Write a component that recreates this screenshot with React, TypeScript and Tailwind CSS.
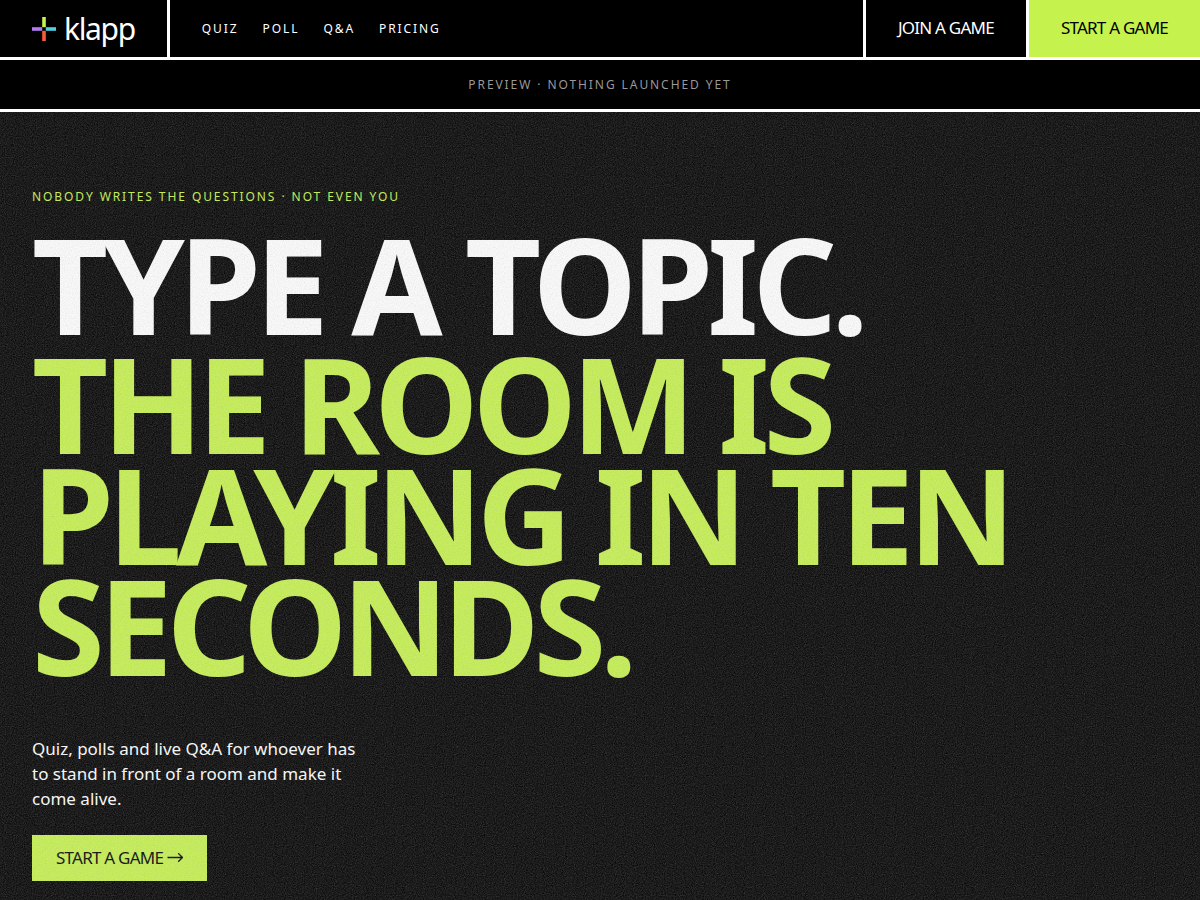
const navLinks = ["Quiz", "Poll", "Q&A", "Pricing"];

const LogoMark = () => (
  <svg width="24" height="24" viewBox="0 0 24 24" aria-hidden="true">
    <rect x="10.2" y="0" width="3.6" height="10.2" fill="#c6f24e" />
    <rect x="13.8" y="10.2" width="10.2" height="3.6" fill="#4fd1e0" />
    <rect x="10.2" y="13.8" width="3.6" height="10.2" fill="#ff5a36" />
    <rect x="0" y="10.2" width="10.2" height="3.6" fill="#b07cf0" />
  </svg>
);

const ArrowIcon = () => (
  <svg
    width="16"
    height="10"
    viewBox="0 0 16 10"
    fill="none"
    stroke="currentColor"
    strokeWidth="1.3"
    aria-hidden="true"
  >
    <path d="M0.5 4.5h15M11.2 0.3L15.5 4.5L11.2 8.7" />
  </svg>
);

const Grain = () => (
  <svg
    className="pointer-events-none absolute inset-0 h-full w-full opacity-30"
    aria-hidden="true"
  >
    <filter id="grain" x="0" y="0" width="100%" height="100%">
      <feTurbulence type="fractalNoise" baseFrequency="0.9" numOctaves="2" stitchTiles="stitch" />
      <feColorMatrix type="saturate" values="0" />
    </filter>
    <rect width="100%" height="100%" filter="url(#grain)" />
  </svg>
);

const Header = () => (
  <header className="flex h-15 items-stretch border-b-3 border-white">
    <a href="#" className="flex items-center gap-2 border-r-3 border-white px-8">
      <LogoMark />
      <span className="text-3xl leading-none tracking-[-0.045em]">klapp</span>
    </a>
    <nav className="flex flex-1 items-center gap-6 px-8">
      {navLinks.map((link) => (
        <a key={link} href="#" className="text-xs uppercase tracking-[0.16em]">
          {link}
        </a>
      ))}
    </nav>
    <a
      href="#"
      className="flex items-center border-l-3 border-white px-8 pb-0.5 text-[17px] uppercase tracking-[-0.045em]"
    >
      Join a game
    </a>
    <a
      href="#"
      className="flex items-center border-l-3 border-white bg-[#c6f24e] px-8 pb-0.5 text-[17px] uppercase tracking-[-0.045em] text-black"
    >
      Start a game
    </a>
  </header>
);

const Hero = () => (
  <section className="relative px-8 pt-19 pb-20">
    <p className="text-xs leading-[18px] uppercase tracking-[0.16em] text-[#c6f24e]">
      Nobody writes the questions · not even you
    </p>
    <h1 className="mt-[23px] text-[132px] leading-[111px] font-bold uppercase tracking-[-0.045em]">
      <span className="block">Type a topic.</span>
      <span className="mt-2 block text-[#c6f24e]">The room is playing in ten seconds.</span>
    </h1>
    <p className="mt-[55px] max-w-[340px] text-[17px] leading-[25px]">
      Quiz, polls and live Q&A for whoever has to stand in front of a room and make it come alive.
    </p>
    <button
      type="button"
      className="mt-6 flex h-[46px] cursor-pointer items-center gap-1 bg-[#c6f24e] px-6 text-[17px] uppercase tracking-[-0.045em] text-black"
    >
      Start a game
      <ArrowIcon />
    </button>
    <Grain />
  </section>
);

const App = () => {
  return (
    <div className="min-h-screen bg-black font-['Noto_Sans',sans-serif] text-white">
      <Header />
      <p className="border-b-3 border-white py-4 text-center text-xs leading-[17px] uppercase tracking-[0.16em] text-[#999999]">
        Preview · nothing launched yet
      </p>
      <Hero />
    </div>
  );
};

export default App;
